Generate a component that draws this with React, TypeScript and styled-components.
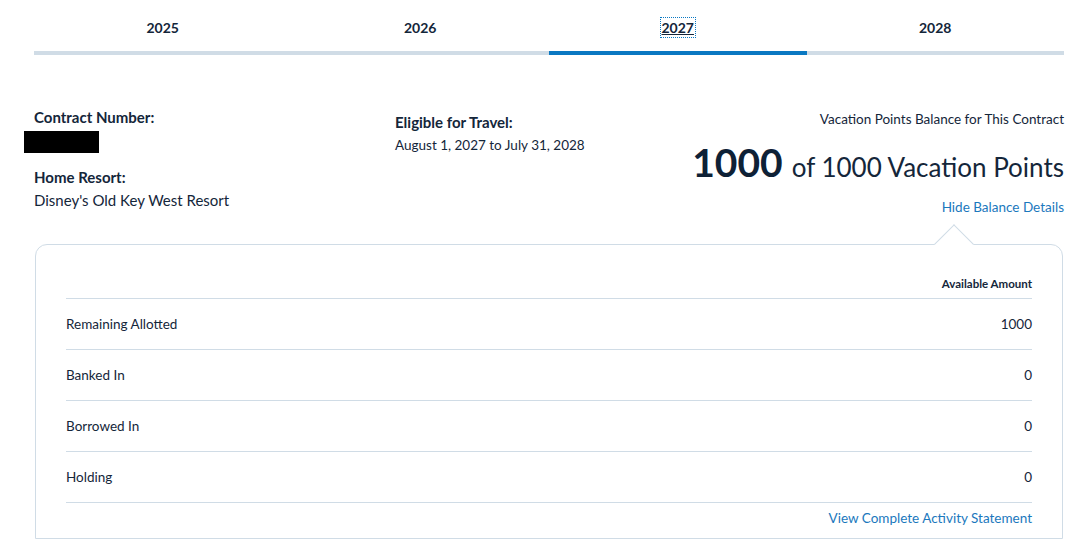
import React from "react";
import styled, { createGlobalStyle } from "styled-components";

const GlobalStyle = createGlobalStyle`
  html, body {
    margin: 0;
    padding: 0;
    background: #fff;
    font-family: Lato, "Open Sans", sans-serif;
    color: #14263a;
  }
`;

const Page = styled.div`
  width: 1080px;
  height: 540px;
  overflow: hidden;
  padding: 0 16px 0 34px;
  box-sizing: border-box;
`;

const Tabs = styled.div`
  display: grid;
  grid-template-columns: repeat(4, 1fr);
`;

const Tab = styled.div<{ $active?: boolean }>`
  height: 55px;
  display: flex;
  align-items: center;
  justify-content: center;
  padding-top: 3px;
  box-sizing: border-box;
  border-bottom: 4px solid ${(p) => (p.$active ? "#0a78c2" : "#d0dce6")};
  font-size: 14px;
  font-weight: 700;
  color: #14263a;

  span {
    text-decoration: ${(p) => (p.$active ? "underline" : "none")};
    outline: ${(p) => (p.$active ? "1px dotted #0a78c2" : "none")};
    outline-offset: 1px;
  }
`;

const Info = styled.div`
  display: grid;
  grid-template-columns: 361px 1fr auto;
  padding-top: 53px;
`;

const Col = styled.div<{ $offset?: number }>`
  display: flex;
  flex-direction: column;
  padding-top: ${(p) => p.$offset ?? 0}px;
`;

const Label = styled.div`
  font-size: 15px;
  font-weight: 700;
  line-height: 18px;
  margin-bottom: 5px;
`;

const Value = styled.div<{ $size?: number }>`
  font-size: ${(p) => p.$size ?? 14}px;
  line-height: 18px;
`;

const Redacted = styled.div`
  width: 75px;
  height: 22px;
  background: #000;
  margin: 0 0 15px -10px;
`;

const Right = styled.div`
  display: flex;
  flex-direction: column;
  align-items: flex-end;
  padding-top: 2px;
`;

const Balance = styled.div`
  margin-top: 10px;
  display: flex;
  align-items: baseline;
  gap: 9px;
  line-height: 48px;
`;

const Big = styled.span`
  font-size: 39px;
  font-weight: 700;
  color: #0e2136;
`;

const Of = styled.span`
  font-size: 26px;
  font-weight: 400;
`;

const Link = styled.a<{ $gap?: number }>`
  color: #1b78bd;
  font-size: 13.5px;
  text-decoration: none;
  cursor: pointer;
  margin-top: ${(p) => p.$gap ?? 0}px;
`;

const Card = styled.div`
  position: relative;
  margin: 29px 1px 0 1px;
  border: 1px solid #d0dce6;
  border-radius: 12px 12px 0 0;
  padding: 31px 30px 12px 30px;
  background: #fff;
`;

const Caret = styled.div`
  position: absolute;
  top: -15px;
  right: 94px;
  width: 27px;
  height: 27px;
  background: #fff;
  border-top: 1px solid #d0dce6;
  border-left: 1px solid #d0dce6;
  transform: rotate(45deg);
`;

const HeaderRow = styled.div`
  display: flex;
  justify-content: flex-end;
  font-size: 11.5px;
  font-weight: 700;
  padding-bottom: 6px;
  border-bottom: 1px solid #d0dce6;
  line-height: 16px;
`;

const Row = styled.div`
  display: flex;
  justify-content: space-between;
  align-items: center;
  height: 51px;
  border-bottom: 1px solid #d0dce6;
  box-sizing: border-box;
  font-size: 13.5px;
  color: #14263a;
`;

const Footer = styled.div`
  display: flex;
  justify-content: flex-end;
  padding-top: 7px;
`;

const years = ["2025", "2026", "2027", "2028"];

const rows = [
  { label: "Remaining Allotted", amount: "1000" },
  { label: "Banked In", amount: "0" },
  { label: "Borrowed In", amount: "0" },
  { label: "Holding", amount: "0" },
];

const App = () => {
  return (
    <>
      <GlobalStyle />
      <Page>
        <Tabs>
          {years.map((y) => (
            <Tab key={y} $active={y === "2027"}>
              <span>{y}</span>
            </Tab>
          ))}
        </Tabs>

        <Info>
          <Col>
            <Label>Contract Number:</Label>
            <Redacted />
            <Label>Home Resort:</Label>
            <Value $size={15}>Disney's Old Key West Resort</Value>
          </Col>
          <Col $offset={5}>
            <Label>Eligible for Travel:</Label>
            <Value $size={13.5}>August 1, 2027 to July 31, 2028</Value>
          </Col>
          <Right>
            <Value $size={13.5}>Vacation Points Balance for This Contract</Value>
            <Balance>
              <Big>1000</Big>
              <Of>of 1000 Vacation Points</Of>
            </Balance>
            <Link $gap={8}>Hide Balance Details</Link>
          </Right>
        </Info>

        <Card>
          <Caret />
          <HeaderRow>Available Amount</HeaderRow>
          {rows.map((r) => (
            <Row key={r.label}>
              <span>{r.label}</span>
              <span>{r.amount}</span>
            </Row>
          ))}
          <Footer>
            <Link>View Complete Activity Statement</Link>
          </Footer>
        </Card>
      </Page>
    </>
  );
};

export default App;
